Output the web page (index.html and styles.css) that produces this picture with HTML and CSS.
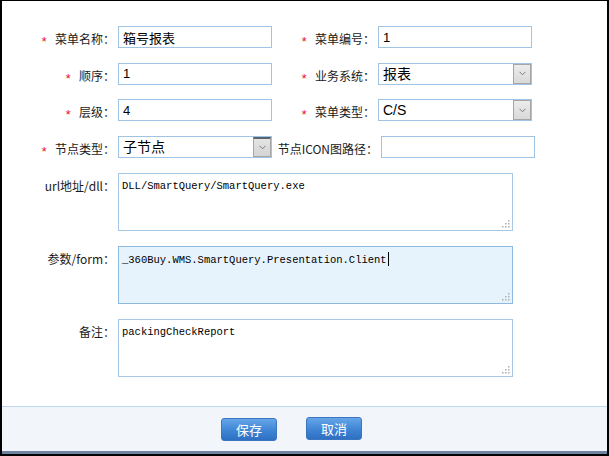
FILE: index.html
```html
<!DOCTYPE html>
<html lang="zh-CN">
<head>
<meta charset="utf-8">
<title>菜单编辑</title>
<link rel="stylesheet" href="styles.css">
</head>
<body>
<div class="window">
  <form class="form">
    <div class="grid">
      <label class="lbl"><span class="req">*</span>菜单名称：</label>
      <input class="inp" value="箱号报表">
      <label class="lbl"><span class="req">*</span>菜单编号：</label>
      <input class="inp" value="1">

      <label class="lbl"><span class="req">*</span>顺序：</label>
      <input class="inp" value="1">
      <label class="lbl"><span class="req">*</span>业务系统：</label>
      <div class="sel"><span class="sel-text">报表</span><span class="sel-btn"><svg width="7" height="5" viewBox="0 0 7 5"><polyline points="0.5,0.8 3.5,3.8 6.5,0.8" fill="none" stroke="#7a7a7a" stroke-width="1"/></svg></span></div>

      <label class="lbl"><span class="req">*</span>层级：</label>
      <input class="inp" value="4">
      <label class="lbl"><span class="req">*</span>菜单类型：</label>
      <div class="sel"><span class="sel-text">C/S</span><span class="sel-btn"><svg width="7" height="5" viewBox="0 0 7 5"><polyline points="0.5,0.8 3.5,3.8 6.5,0.8" fill="none" stroke="#7a7a7a" stroke-width="1"/></svg></span></div>

      <label class="lbl"><span class="req">*</span>节点类型：</label>
      <div class="sel"><span class="sel-text">子节点</span><span class="sel-btn sel-btn-hover"><svg width="7" height="5" viewBox="0 0 7 5"><polyline points="0.5,0.8 3.5,3.8 6.5,0.8" fill="none" stroke="#7a7a7a" stroke-width="1"/></svg></span></div>
      <label class="lbl lbl-wide">节点ICON图路径：</label>
      <input class="inp inp-shift" value="">
    </div>

    <div class="areas">
      <div class="arow">
        <span class="lbl lbl-area">url地址/dll：</span>
        <div class="ta">DLL/SmartQuery/SmartQuery.exe<svg class="grip" width="10" height="10" viewBox="0 0 10 10"><g fill="#b0b0b0"><rect x="8" y="2" width="1.5" height="1.5"/><rect x="5" y="5" width="1.5" height="1.5"/><rect x="8" y="5" width="1.5" height="1.5"/><rect x="2" y="8" width="1.5" height="1.5"/><rect x="5" y="8" width="1.5" height="1.5"/><rect x="8" y="8" width="1.5" height="1.5"/></g></svg></div>
      </div>
      <div class="arow">
        <span class="lbl lbl-area">参数/form：</span>
        <div class="ta ta-focus">_360Buy.WMS.SmartQuery.Presentation.Client<span class="caret"></span><svg class="grip" width="10" height="10" viewBox="0 0 10 10"><g fill="#b0b0b0"><rect x="8" y="2" width="1.5" height="1.5"/><rect x="5" y="5" width="1.5" height="1.5"/><rect x="8" y="5" width="1.5" height="1.5"/><rect x="2" y="8" width="1.5" height="1.5"/><rect x="5" y="8" width="1.5" height="1.5"/><rect x="8" y="8" width="1.5" height="1.5"/></g></svg></div>
      </div>
      <div class="arow">
        <span class="lbl lbl-area">备注：</span>
        <div class="ta">packingCheckReport<svg class="grip" width="10" height="10" viewBox="0 0 10 10"><g fill="#b0b0b0"><rect x="8" y="2" width="1.5" height="1.5"/><rect x="5" y="5" width="1.5" height="1.5"/><rect x="8" y="5" width="1.5" height="1.5"/><rect x="2" y="8" width="1.5" height="1.5"/><rect x="5" y="8" width="1.5" height="1.5"/><rect x="8" y="8" width="1.5" height="1.5"/></g></svg></div>
      </div>
    </div>
  </form>

  <div class="footer">
    <button class="btn btn-save" type="button">保存</button>
    <button class="btn" type="button">取消</button>
  </div>
</div>
</body>
</html>
```

FILE: styles.css
```css
html, body {
  margin: 0;
  padding: 0;
  background: #fff;
}

body {
  width: 609px;
  height: 456px;
  overflow: hidden;
  font-family: "Liberation Sans", "Noto Sans CJK SC", sans-serif;
  color: #222;
}

.window {
  box-sizing: border-box;
  width: 609px;
  height: 456px;
  border-top: 1px solid #000;
  border-left: 2px solid #000;
  border-right: 2px solid #000;
  border-bottom: 2px solid #000;
  display: flex;
  flex-direction: column;
  background: #fff;
}

.form {
  margin: 0;
  display: flex;
  flex-direction: column;
}

.grid {
  display: grid;
  grid-template-columns: 116px 154px 106px 154px;
  grid-auto-rows: 22px;
  row-gap: 14.5px;
  padding-top: 25px;
  align-items: start;
}

.lbl {
  box-sizing: border-box;
  height: 22px;
  text-align: right;
  padding-right: 3px;
  padding-top: 4px;
  font-family: "Noto Sans CJK SC", "Liberation Sans", sans-serif;
  font-size: 12px;
  line-height: 18px;
  white-space: nowrap;
  color: #1a1a1a;
}

.lbl-wide {
  padding-right: 0;
  margin-left: -4px;
}

.req {
  color: #e8141b;
  font-family: "Liberation Mono", monospace;
  font-size: 13px;
  margin-right: 7px;
  vertical-align: -2px;
}

.inp {
  box-sizing: border-box;
  width: 154px;
  height: 22px;
  margin: 0;
  border: 1px solid #9fc4e4;
  padding: 0 4px;
  font-family: "Liberation Sans", "Noto Sans CJK SC", sans-serif;
  font-size: 13px;
  color: #000;
  background: #fff;
  outline: none;
}

.inp-shift {
  margin-left: 3px;
}

.sel {
  box-sizing: border-box;
  width: 154px;
  height: 22px;
  border: 1px solid #9fc4e4;
  background: #fff;
  display: flex;
}

.sel-text {
  flex: 1;
  padding-left: 4px;
  font-size: 14px;
  line-height: 20px;
  color: #000;
}

.sel-btn {
  box-sizing: border-box;
  width: 18px;
  height: 20px;
  border: 1px solid #a6a6a6;
  background: linear-gradient(#ececec, #d9d9d9);
  display: flex;
  align-items: center;
  justify-content: center;
}

.sel-btn-hover {
  border-top: 2px solid #5a6470;
  background: linear-gradient(#e4e4e4, #d4d4d4);
}

.areas {
  display: flex;
  flex-direction: column;
  gap: 15px;
  margin-top: 15px;
}

.arow {
  display: flex;
  align-items: flex-start;
}

.lbl-area {
  width: 116px;
  height: auto;
  line-height: 14px;
  padding-top: 6px;
}

.ta {
  position: relative;
  box-sizing: border-box;
  width: 395px;
  height: 58px;
  border: 1px solid #a7c8e6;
  padding: 5px 3px;
  font-family: "Liberation Mono", monospace;
  font-size: 10.5px;
  line-height: 14px;
  color: #000;
  background: #fff;
  white-space: pre;
}

.ta-focus {
  background: #e6f3fc;
  border-color: #8db8e0;
}

.caret {
  display: inline-block;
  width: 1px;
  height: 14px;
  background: #000;
  vertical-align: -3px;
  margin-left: 1px;
}

.grip {
  position: absolute;
  right: 2px;
  bottom: 2px;
}

.footer {
  margin-top: auto;
  box-sizing: border-box;
  height: 48px;
  border-top: 1px solid #bcd7f0;
  border-bottom: 3px solid #6f839e;
  background: #f2f6fb;
  display: flex;
  align-items: flex-start;
  gap: 29px;
  padding-left: 219px;
  padding-top: 10px;
}

.btn {
  box-sizing: border-box;
  width: 56px;
  height: 23px;
  margin: 0;
  padding: 0;
  border: 1px solid #3a76c0;
  border-radius: 3px;
  background: linear-gradient(#66a6e8, #3f85d4 55%, #2e6fc2);
  color: #fff;
  font-family: "Noto Sans CJK SC", sans-serif;
  font-size: 13px;
  line-height: 21px;
  text-align: center;
}

.btn-save {
  margin-top: 1px;
}
```
